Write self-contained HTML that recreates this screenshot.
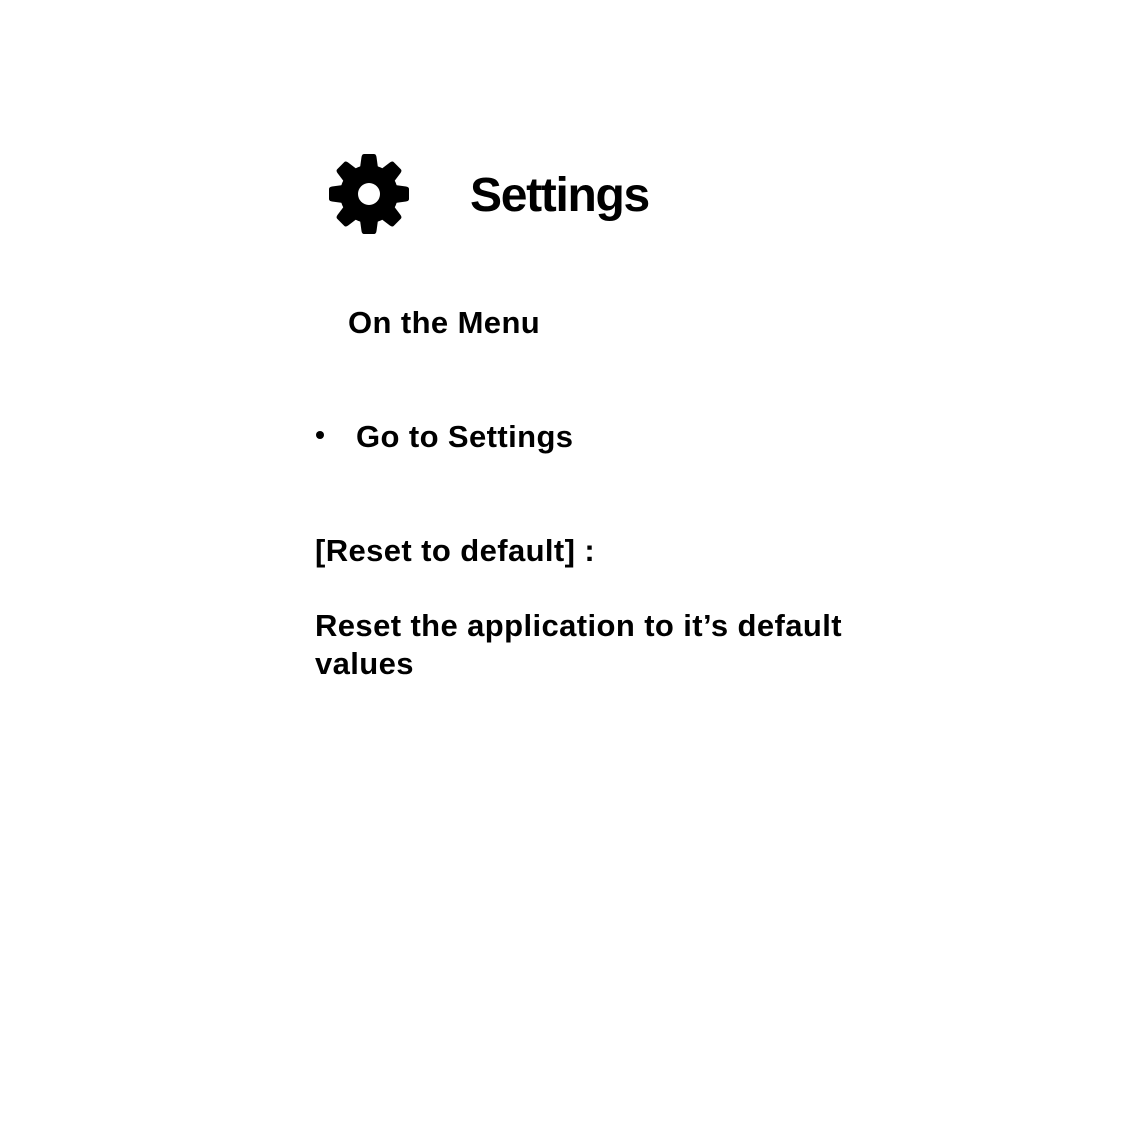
<!DOCTYPE html>
<html><head><meta charset="utf-8"><style>
html,body{margin:0;padding:0;background:#fff;}
body{width:1134px;height:1134px;position:relative;overflow:hidden;font-family:"Liberation Sans",Arial,sans-serif;font-weight:bold;color:#000;}
.t{position:absolute;line-height:1;white-space:nowrap;font-size:31px;letter-spacing:0.4px;}
</style></head><body>
<svg style="position:absolute;left:329px;top:154px" width="80" height="80" viewBox="-40 -40 80 80">
<g fill="#000">
<circle r="29"/>
<g id="tt"><path d="M-5 -40 H5 Q7 -40 7.5 -37 L9 -26 H-9 L-7.5 -37 Q-7 -40 -5 -40Z"/></g>
<use href="#tt" transform="rotate(45)"/>
<use href="#tt" transform="rotate(90)"/>
<use href="#tt" transform="rotate(135)"/>
<use href="#tt" transform="rotate(180)"/>
<use href="#tt" transform="rotate(225)"/>
<use href="#tt" transform="rotate(270)"/>
<use href="#tt" transform="rotate(315)"/>
</g>
<circle r="11" fill="#fff"/>
</svg>
<div class="t" style="left:470px;top:172px;font-size:48px;letter-spacing:-1.3px">Settings</div>
<div class="t" style="left:348px;top:307px">On the Menu</div>
<div style="position:absolute;left:316px;top:431px;width:8px;height:8px;border-radius:50%;background:#000"></div>
<div class="t" style="left:356px;top:421px">Go to Settings</div>
<div class="t" style="left:315px;top:535px">[Reset to default] :</div>
<div class="t" style="left:315px;top:610px">Reset the application to it’s default</div>
<div class="t" style="left:315px;top:648px">values</div>
</body></html>
